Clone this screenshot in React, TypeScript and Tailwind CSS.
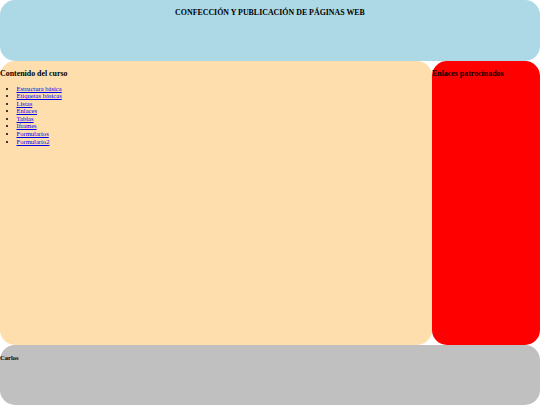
import React from 'react';

const temas = [
  'Estructura básica',
  'Etiquetas básicas',
  'Listas',
  'Enlaces',
  'Tablas',
  'Iframes',
  'Formularios',
  'Formulario2',
];

export default function App() {
  return (
    <div className="w-[540px] h-[405px] flex flex-col bg-white text-black font-['Liberation_Serif',serif]">
      <header className="h-[61px] shrink-0 rounded-[15px] bg-[#add8e6] pt-[8px]">
        <h3 className="text-center text-[7.9px] leading-[9px] font-bold">
          CONFECCIÓN Y PUBLICACIÓN DE PÁGINAS WEB
        </h3>
      </header>

      <div className="flex h-[284px] shrink-0">
        <main className="w-[432px] rounded-[15px] bg-[#ffdead] pt-[7.5px]">
          <h3 className="text-[7.9px] leading-[9px] font-bold">Contenido del curso</h3>
          <ul className="list-disc pl-[16.5px] mt-[7px] text-[6.6px] leading-[7.6px]">
            {temas.map((t) => (
              <li key={t}>
                <a href="#" className="text-[#0000ee] underline">
                  {t}
                </a>
              </li>
            ))}
          </ul>
        </main>
        <aside className="flex-1 rounded-[15px] bg-[#ff0000] pt-[7.5px]">
          <h3 className="text-[7.9px] leading-[9px] font-bold">Enlaces patrocinados</h3>
        </aside>
      </div>

      <footer className="flex-1 rounded-[15px] bg-[#c0c0c0] pt-[8.5px]">
        <h5 className="text-[6.6px] leading-[7.6px] font-bold">Carlos</h5>
      </footer>
    </div>
  );
}
